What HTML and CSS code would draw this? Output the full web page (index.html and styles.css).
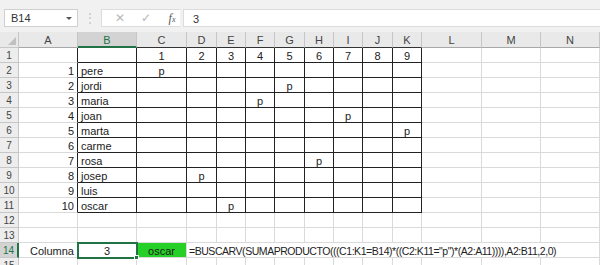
FILE: index.html
```html
<!DOCTYPE html>
<html>
<head>
<title>BUSCARV SUMAPRODUCTO</title>
<link rel="stylesheet" href="styles.css">
</head>
<body>

<div class="topbar">
 <div class="namebox"><span>B14</span><span class="arrow"></span></div>
 <div class="sep">⋮</div>
 <div class="fbuttons">
  <span class="fbtn">✕</span>
  <span class="fbtn">✓</span>
  <span class="fbtn fx"><i>f</i><small>x</small></span>
 </div>
 <div class="formula">3</div>
</div>

<div class="sheet" id="sheet"></div>

<script>
// columnas y datos de la hoja
const cols = ["A","B","C","D","E","F","G","H","I","J","K","L","M","N"];
const names = ["pere","jordi","maria","joan","marta","carme","rosa","josep","luis","oscar"];
// fila -> columna con "p"
const marks = { 2: "C", 3: "G", 4: "F", 5: "I", 6: "K", 8: "H", 9: "D", 11: "E" };

function cell(cls, text) {
 const d = document.createElement("div");
 d.className = "cell " + cls;
 if (text !== undefined) d.textContent = text;
 return d;
}

function buildSheet() {
 const sheet = document.getElementById("sheet");

 // cabecera
 sheet.appendChild(cell("hdr corner"));
 cols.forEach(c => {
  let cls = "hdr col";
  if (c === "B") cls += " sel";
  if ("BCDEFGHIJK".includes(c)) cls += " tbltop";
  sheet.appendChild(cell(cls, c));
 });

 for (let r = 1; r <= 15; r++) {
  sheet.appendChild(cell("hdr row" + (r === 14 ? " sel" : ""), r));
  if (r === 14) {
   sheet.appendChild(cell("right", "Columna"));
   const b = cell("center active", "3");
   b.appendChild(cell("handle"));
   sheet.appendChild(b);
   sheet.appendChild(cell("center green", "oscar"));
   sheet.appendChild(cell("formula-cell", '=BUSCARV(SUMAPRODUCTO(((C1:K1=B14)*((C2:K11="p")*(A2:A11)))),A2:B11,2,0)'));
   continue;
  }
  cols.forEach((c, i) => {
   let cls = "";
   let text = "";
   const inTable = r <= 11 && i >= 1 && i <= 10;
   if (inTable) cls += " tbl";
   if (r <= 11 && c === "A") cls += " tblleft";
   if (r === 1 && i >= 2 && i <= 10) { text = i - 1; cls += " center"; }
   if (r >= 2 && r <= 11) {
    if (c === "A") { text = r - 1; cls += " right"; }
    if (c === "B") { text = names[r - 2]; }
    if (marks[r] === c) { text = "p"; cls += " center"; }
   }
   sheet.appendChild(cell(cls, text));
  });
 }
}

window.onload = buildSheet;
</script>

</body>
</html>
```

FILE: styles.css
```css
body {
 margin: 0;
 font-family: "Liberation Sans", Arial, sans-serif;
 font-size: 11px;
 color: #222;
 background: #fff;
 overflow: hidden;
}

.topbar {
 height: 32px;
 box-sizing: border-box;
 background: #f1f1f1;
 display: flex;
 align-items: flex-start;
 padding: 9px 0 0 4px;
}
.namebox {
 width: 74px;
 height: 18px;
 box-sizing: border-box;
 background: #fff;
 border: 1px solid #d0d0d0;
 display: flex;
 align-items: center;
 justify-content: space-between;
 padding: 0 5px 0 6px;
 color: #333;
}
.arrow {
 width: 0;
 height: 0;
 border-left: 3px solid transparent;
 border-right: 3px solid transparent;
 border-top: 3px solid #555;
}
.sep {
 width: 23px;
 height: 18px;
 line-height: 18px;
 text-align: center;
 color: #c4c4c4;
 font-size: 12px;
}
.fbuttons {
 width: 79px;
 height: 18px;
 box-sizing: border-box;
 background: #fff;
 border: 1px solid #dcdcdc;
 border-right: none;
 display: flex;
 align-items: center;
 padding-left: 10px;
 gap: 10px;
}
.fbtn {
 width: 16px;
 text-align: center;
 color: #b8b8b8;
 font-size: 12px;
}
.fx {
 color: #555;
 font-family: "Liberation Serif", serif;
 font-size: 12px;
}
.fx small { font-size: 8px; font-style: italic; }
.formula {
 flex: 1;
 height: 18px;
 line-height: 18px;
 box-sizing: border-box;
 margin-left: 3px;
 background: #fff;
 border: 1px solid #dcdcdc;
 border-right: none;
 padding-left: 9px;
 color: #333;
}

.sheet {
 display: grid;
 grid-template-columns: 19px 59px 59px 50px 30px 29px 29px 30px 29px 29px 30px 29px 60px 59px 59px;
 grid-template-rows: 16px repeat(15, 15px);
}
.cell {
 box-sizing: border-box;
 border-right: 1px solid #dadada;
 border-bottom: 1px solid #dadada;
 white-space: nowrap;
 line-height: 14px;
 padding: 1px 3px 0;
 overflow: visible;
 position: relative;
}
.hdr {
 background: #e9e9e9;
 color: #444;
 border-color: #c6c6c6;
 text-align: center;
 padding: 0;
}
.hdr.col { line-height: 16px; border-bottom-color: #a8a8a8; }
.hdr.row { background: #ededed; font-size: 10px; padding-top: 1px; }
.hdr.sel {
 background: #d3d3d3;
 color: #217346;
}
.hdr.col.sel { border-bottom: 2px solid #217346; }
.hdr.row.sel { border-right: 2px solid #217346; }
.corner::after {
 content: "";
 position: absolute;
 right: 2px;
 bottom: 2px;
 border-left: 8px solid transparent;
 border-bottom: 8px solid #c0c0c0;
}
.hdr.tbltop { border-bottom-color: #333; }
.hdr.col.sel.tbltop { border-bottom: 2px solid #217346; }

.tbl {
 border-right-color: #222;
 border-bottom-color: #222;
}
.tblleft { border-right-color: #222; }
.center { text-align: center; }
.right { text-align: right; }

.active {
 outline: 2px solid #217346;
 outline-offset: -1px;
 z-index: 2;
}
.handle {
 position: absolute;
 right: -3px;
 bottom: -3px;
 width: 5px;
 height: 5px;
 padding: 0;
 background: #217346;
 border: 1px solid #fff;
}
.green {
 background: #27d027;
 color: #1a1a1a;
}
.formula-cell {
 grid-column: span 11;
 padding-left: 2px;
 font-size: 10.5px;
 letter-spacing: -0.45px;
}
```
